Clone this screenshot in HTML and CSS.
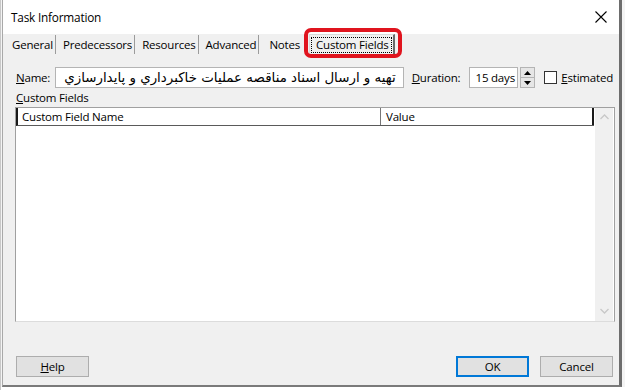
FILE: index.html
```html
<!DOCTYPE html>
<html lang="en">
<head>
<meta charset="utf-8">
<title>Task Information</title>
<link rel="stylesheet" href="styles.css">
</head>
<body>
<div class="desk">
  <div class="dialog">
    <div class="titlebar">
      <span class="title">Task Information</span>
      <span class="close">
        <svg width="12" height="12" viewBox="0 0 12 12"><path d="M0.5 0.5 L11.5 11.5 M11.5 0.5 L0.5 11.5" stroke="#000" stroke-width="1.1" fill="none"/></svg>
      </span>
    </div>
    <div class="tabs">
      <span class="tab">General</span>
      <span class="tab">Predecessors</span>
      <span class="tab">Resources</span>
      <span class="tab">Advanced</span>
      <span class="tab notes">Notes</span>
      <span class="tab active"><span class="focus">Custom Fields</span></span>
      <span class="mark"></span>
    </div>
    <div class="body">
      <div class="namerow">
        <label class="lbl name-lbl"><u>N</u>ame:</label>
        <div class="field name-field" dir="rtl">تهيه و ارسال اسناد مناقصه عمليات خاكبرداري و پايدارسازي</div>
        <label class="lbl dur-lbl"><u>D</u>uration:</label>
        <div class="field dur-field">15 days</div>
        <div class="spin">
          <span class="sb"><svg width="7" height="4" viewBox="0 0 7 4"><path d="M0 4 L3.5 0 L7 4Z" fill="#000"/></svg></span>
          <span class="sb"><svg width="7" height="4" viewBox="0 0 7 4"><path d="M0 0 L3.5 4 L7 0Z" fill="#000"/></svg></span>
        </div>
        <span class="check"></span>
        <label class="lbl est-lbl"><u>E</u>stimated</label>
      </div>
      <div class="section-lbl"><u>C</u>ustom Fields</div>
      <div class="grid">
        <div class="gridmain">
          <div class="ghead">
            <span class="gcol c1">Custom Field Name</span>
            <span class="gcol c2">Value</span>
          </div>
          <div class="gbody"></div>
        </div>
        <div class="vscroll">
          <svg width="9" height="6" viewBox="0 0 9 6"><path d="M0.5 5 L4.5 1 L8.5 5" stroke="#c8c8c8" stroke-width="1.3" fill="none"/></svg>
          <svg width="9" height="6" viewBox="0 0 9 6"><path d="M0.5 1 L4.5 5 L8.5 1" stroke="#c8c8c8" stroke-width="1.3" fill="none"/></svg>
        </div>
      </div>
      <div class="buttons">
        <button class="btn"><u>H</u>elp</button>
        <span class="spacer"></span>
        <button class="btn default">OK</button>
        <button class="btn">Cancel</button>
      </div>
    </div>
  </div>
  <div class="below"></div>
</div>
</body>
</html>
```
FILE: styles.css
```css
* { box-sizing: border-box; }
html, body { margin: 0; padding: 0; }
body {
  width: 625px;
  height: 390px;
  overflow: hidden;
  background: #ffffff;
  font-family: "Open Sans", "Noto Sans", "DejaVu Sans", sans-serif;
  font-size: 11.5px;
  letter-spacing: -0.2px;
  color: #000;
}
.desk {
  width: 625px;
  height: 390px;
  background: #f4f4f4;
  border-left: 1px solid #c8c8c8;
}
.dialog {
  margin-left: 1px;
  width: 620px;
  height: 387px;
  background: #f0f0f0;
  border-left: 1px solid #a9a9a9;
  border-right: 3px solid #6d6d6d;
  border-bottom: 2px solid #7a7a7a;
  display: flex;
  flex-direction: column;
}
.titlebar {
  height: 34px;
  background: #fff;
  display: flex;
  align-items: center;
  justify-content: space-between;
  padding: 0 10px 0 8px;
  flex: none;
}
.title { font-size: 11.8px; padding-bottom: 1px; }
.close { display: flex; width: 12px; height: 12px; margin-right: 2px; }

.tabs {
  height: 21px;
  display: flex;
  align-items: stretch;
  padding-left: 9px;
  position: relative;
  flex: none;
}
.tab {
  display: flex;
  align-items: center;
  padding: 0 2px 0 0;
  margin-right: 7px;
  border-right: 1px solid #9b9b9b;
  height: 19px;
  margin-top: 1px;
  padding-bottom: 1px;
}
.tab.notes { border-right: none; margin-left: 3px; margin-right: 7px; }
.tab.active {
  border: 1px solid #dadada;
  border-bottom: none;
  border-right: 2px solid #6a6a6a;
  background: #f0f0f0;
  margin-top: 0;
  height: 21px;
  padding: 1px 1px 1px 1px;
}
.focus {
  border: 1px dotted #000;
  padding: 0 2px 0 4px;
  line-height: 14px;
}
.mark {
  position: absolute;
  left: 301px;
  top: -6px;
  width: 98px;
  height: 30px;
  border: 4px solid #e0141e;
  border-radius: 7px;
}

.body {
  flex: 1;
  display: flex;
  flex-direction: column;
  padding: 12px 6px 6px 12px;
}
.namerow {
  display: flex;
  align-items: center;
  height: 21px;
}
.lbl { white-space: nowrap; }
.name-lbl { width: 39px; margin-left: 1px; }
.field {
  height: 21px;
  background: #fff;
  border: 1px solid #b4b4b4;
  display: flex;
  align-items: center;
  white-space: nowrap;
  overflow: hidden;
}
.name-field {
  width: 350px;
  font-family: "DejaVu Sans", sans-serif;
  font-size: 13.4px;
  letter-spacing: 0;
  padding: 0 7px 1px 3px;
  justify-content: flex-start;
}
.dur-lbl { margin-left: 8px; width: 57px; }
.dur-field { width: 50px; padding-left: 6px; padding-bottom: 1px; }
.spin {
  margin-left: 2px;
  width: 15px;
  height: 21px;
  display: flex;
  flex-direction: column;
  border: 1px solid #b4b4b4;
  background: #e6e6e6;
}
.sb {
  flex: 1;
  display: flex;
  align-items: center;
  justify-content: center;
}
.sb:first-child { border-bottom: 1px solid #b4b4b4; }
.check {
  margin-left: 9px;
  width: 13px;
  height: 13px;
  background: #fff;
  border: 1px solid #333;
}
.est-lbl { margin-left: 4px; }

.section-lbl {
  margin-top: 2px;
  margin-left: 1px;
  height: 16px;
  line-height: 15px;
}
.grid {
  margin-top: 1px;
  width: 600px;
  height: 215px;
  border: 1px solid #a0a0a0;
  border-bottom: 1px solid #dcdcdc;
  background: #fff;
  display: flex;
}
.gridmain { flex: 1; display: flex; flex-direction: column; }
.ghead {
  height: 18px;
  display: flex;
  border-left: 2px solid #1a1a1a;
  border-bottom: 1px solid #5a5a5a;
  background: #fff;
}
.gcol {
  display: flex;
  align-items: center;
  padding-left: 4px;
  padding-bottom: 1px;
}
.c1 { width: 363px; border-right: 1px solid #777; }
.c2 { flex: 1; padding-left: 5px; border-right: 2px solid #1a1a1a; }
.gbody { flex: 1; background: #fff; }
.vscroll {
  width: 18px;
  margin: 0 1px 0 1px;
  background: #f0f0f0;
  display: flex;
  flex-direction: column;
  align-items: center;
  justify-content: space-between;
  padding: 6px 0 7px;
}

.buttons {
  margin-top: auto;
  display: flex;
  align-items: center;
  padding-left: 1px;
  margin-bottom: 2px;
}
.spacer { flex: 1; }
.btn {
  width: 73px;
  height: 21px;
  background: #e1e1e1;
  border: 1px solid #adadad;
  font-family: inherit;
  font-size: 11.5px;
  letter-spacing: -0.2px;
  color: #000;
  padding: 0 0 1px;
  margin: 0;
}
.btn.default { border: 2px solid #0078d7; margin-right: 11px; }
.below {
  height: 3px;
  background: #fff;
}
```
